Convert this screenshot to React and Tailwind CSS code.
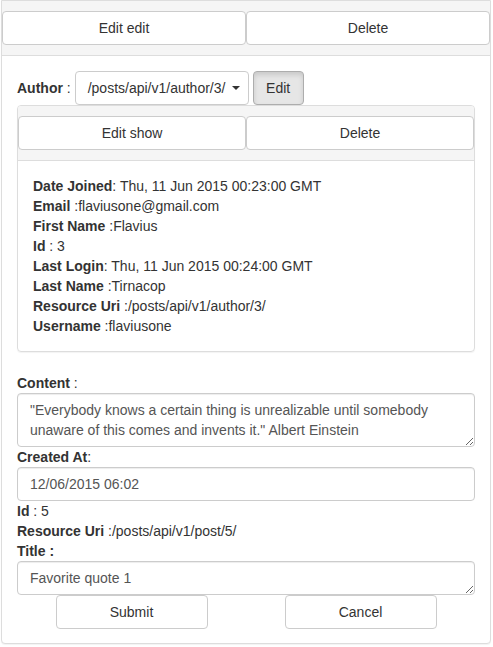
import React from 'react';

const btn = 'h-[34px] border border-[#ccc] bg-white rounded-[4px] text-[14px] text-[#333] flex items-center justify-center';
const field = 'w-full border border-[#ccc] rounded-[4px] bg-white px-3 py-[6px] text-[14px] leading-5 text-[#555] shadow-[inset_0_1px_1px_rgba(0,0,0,0.075)] outline-none';

const Row = ({ label, value }) => (
  <div className="h-5">
    <b>{label}</b>
    {value}
  </div>
);

const author = [
  ['Date Joined', ': Thu, 11 Jun 2015 00:23:00 GMT'],
  ['Email', ' :flaviusone@gmail.com'],
  ['First Name', ' :Flavius'],
  ['Id', ' : 3'],
  ['Last Login', ': Thu, 11 Jun 2015 00:24:00 GMT'],
  ['Last Name', ' :Tirnacop'],
  ['Resource Uri', ' :/posts/api/v1/author/3/'],
  ['Username', ' :flaviusone'],
];

export default function App() {
  return (
    <div
      className="min-h-screen bg-white text-[14px] leading-5 text-[#333] pl-px"
      style={{ fontFamily: '"Liberation Sans", Arial, sans-serif' }}
    >
      {/* outer panel */}
      <div className="w-[490px] border border-[#ddd] rounded-b-[4px] bg-white shadow-[0_1px_1px_rgba(0,0,0,0.05)]">
        <div className="bg-[#f5f5f5] border-b border-[#ddd] pt-[10px] pb-[10px] flex">
          <button className={`${btn} flex-1`}>Edit edit</button>
          <button className={`${btn} flex-1`}>Delete</button>
        </div>

        <div className="px-[15px] pt-[15px] pb-[14px]">
          {/* author select */}
          <div className="flex items-center">
            <span className="mr-1">
              <b>Author</b> :
            </span>
            <div className="w-[174px] h-[34px] border border-[#ccc] rounded-[4px] bg-white flex items-center pl-3 pr-2 text-[#333]">
              <span className="flex-1">/posts/api/v1/author/3/</span>
              <span className="w-0 h-0 border-l-[4px] border-r-[4px] border-t-[4px] border-l-transparent border-r-transparent border-t-[#333]" />
            </div>
            <button className="ml-[4px] w-[51px] h-[34px] border border-[#adadad] rounded-[4px] bg-[#e6e6e6] shadow-[inset_0_3px_5px_rgba(0,0,0,0.125)] text-[#333]">
              Edit
            </button>
          </div>

          {/* author panel */}
          <div className="border border-[#ddd] rounded-[4px] shadow-[0_1px_1px_rgba(0,0,0,0.05)] mb-[21px]">
            <div className="bg-[#f5f5f5] border-b border-[#ddd] rounded-t-[3px] pt-[10px] pb-[10px] flex">
              <button className={`${btn} flex-1`}>Edit show</button>
              <button className={`${btn} flex-1`}>Delete</button>
            </div>
            <div className="p-[15px]">
              {author.map(([k, v]) => (
                <Row key={k} label={k} value={v} />
              ))}
            </div>
          </div>

          {/* post form */}
          <div>
            <b>Content</b> :
          </div>
          <textarea
            className={`${field} h-[54px] block resize-y`}
            defaultValue={'"Everybody knows a certain thing is unrealizable until somebody unaware of this comes and invents it." Albert Einstein'}
          />
          <div>
            <b>Created At</b>:
          </div>
          <input className={`${field} h-[34px] block`} defaultValue="12/06/2015 06:02" />
          <Row label="Id" value=" : 5" />
          <Row label="Resource Uri" value=" :/posts/api/v1/post/5/" />
          <div>
            <b>Title :</b>
          </div>
          <textarea className={`${field} h-[34px] block resize-y`} defaultValue="Favorite quote 1" />
          <div className="flex">
            <div className="flex-1 flex justify-center">
              <button className={`${btn} w-[152px]`}>Submit</button>
            </div>
            <div className="flex-1 flex justify-center">
              <button className={`${btn} w-[152px]`}>Cancel</button>
            </div>
          </div>
        </div>
      </div>
    </div>
  );
}
